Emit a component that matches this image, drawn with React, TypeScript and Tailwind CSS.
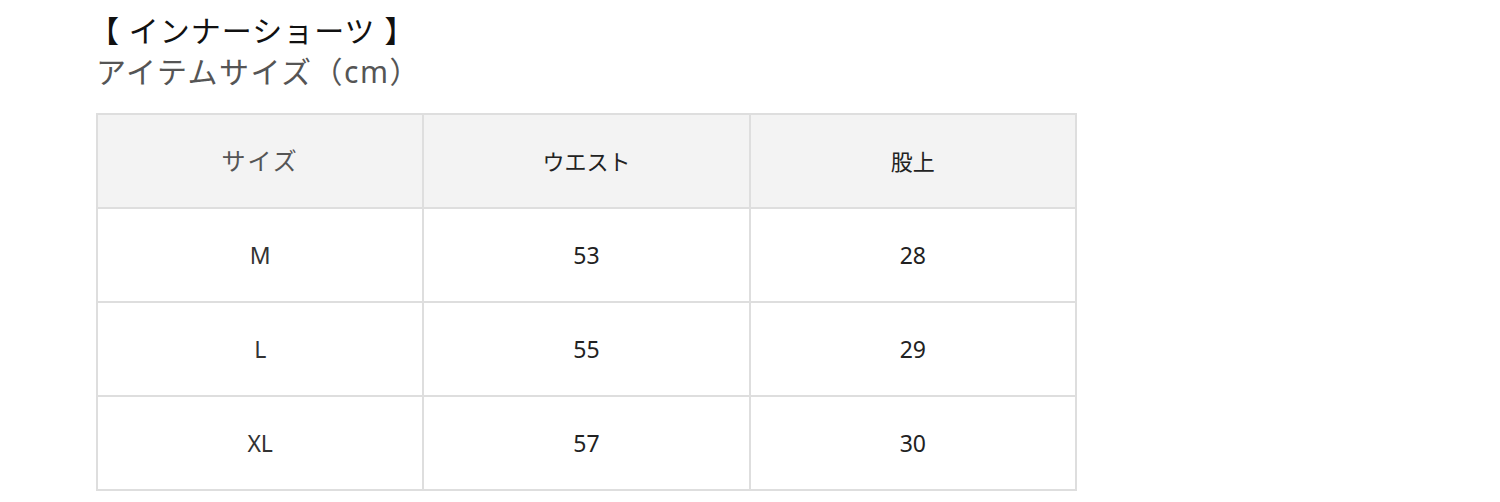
export default function App() {
  const rows = [
    { size: 'M', waist: '53', rise: '28' },
    { size: 'L', waist: '55', rise: '29' },
    { size: 'XL', waist: '57', rise: '30' },
  ];

  return (
    <div className="min-h-[502px] bg-white pl-[96px] pt-[11px] font-['Noto_Sans','Noto_Sans_CJK_JP',sans-serif]">
      <h2 className="-ml-[7px] text-[30px] leading-[40px] tracking-[1px] text-[#111]">【 インナーショーツ 】</h2>
      <p className="text-[30px] leading-[41px] tracking-[1.5px] text-[#555]">アイテムサイズ（cm）</p>

      {/* Size Table */}
      <table className="mt-[21px] w-[981px] table-fixed border-collapse border-2 border-[#dedede] text-[23px]">
        <thead>
          <tr className="h-[94px] bg-[#f3f3f3]">
            <th className="border-2 border-[#dedede] text-[24px] font-normal tracking-[2px] text-[#555]">サイズ</th>
            <th className="border-2 border-[#dedede] text-[22px] font-normal text-[#222]">ウエスト</th>
            <th className="border-2 border-[#dedede] text-[22px] font-normal text-[#222]">股上</th>
          </tr>
        </thead>
        <tbody>
          {rows.map((row) => (
            <tr key={row.size} className="h-[94px] text-center">
              <td className="border-2 border-[#dedede] text-[#333]">{row.size}</td>
              <td className="border-2 border-[#dedede] text-[#222]">{row.waist}</td>
              <td className="border-2 border-[#dedede] text-[#222]">{row.rise}</td>
            </tr>
          ))}
        </tbody>
      </table>
    </div>
  );
}
